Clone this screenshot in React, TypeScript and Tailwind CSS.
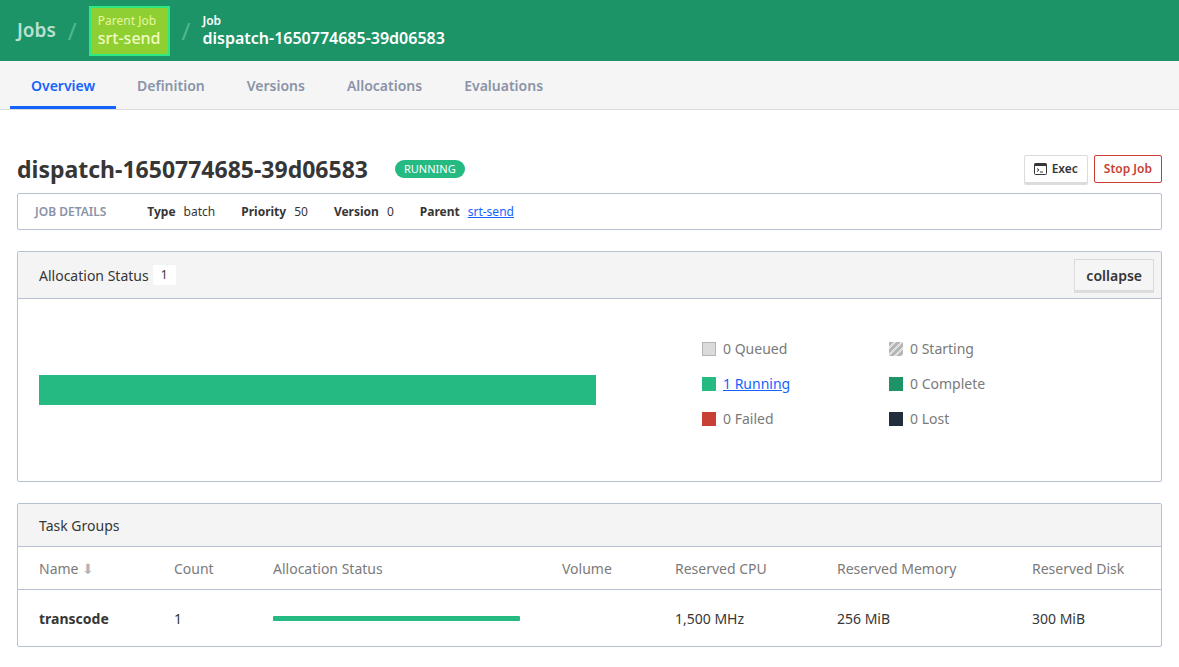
export default function App() {
  const f = { fontFamily: '"Noto Sans", "Open Sans", sans-serif' };
  const legend = (c: string, t: string, link = false, striped = false) => (
    <div className="flex items-center h-[35px] text-[14px]">
      <span
        className={`w-[14px] h-[14px] mr-[7px] ${c}`}
        style={striped ? { background: "repeating-linear-gradient(135deg,#b5b5b5 0 3px,#e0e0e0 3px 5px)" } : undefined}
      />
      <span className={link ? "text-[#1563ff] underline" : "text-[#7a7a7a]"}>{t}</span>
    </div>
  );
  return (
    <div style={f} className="w-[1179px] h-[667px] overflow-hidden bg-white text-[#363636]">
      <div className="h-[61px] bg-[#1d9467] flex items-center pl-[17px]">
        <span className="text-[19px] font-semibold text-[#b9e0d0]">Jobs</span>
        <span className="text-[24px] text-[#4fb98f] mx-[12px]">/</span>
        <div className="h-[50px] bg-[#8fcf32] border-2 border-[#2ee881] px-[7px] flex flex-col justify-center leading-tight">
          <span className="text-[12px] text-[#e4f6a0]">Parent Job</span>
          <span className="text-[16px] text-[#f0fbc0] font-medium">srt-send</span>
        </div>
        <span className="text-[24px] text-[#4fb98f] mx-[12px]">/</span>
        <div className="flex flex-col leading-tight text-white">
          <span className="text-[12px] font-semibold">Job</span>
          <span className="text-[16px] font-semibold">dispatch-1650774685-39d06583</span>
        </div>
      </div>
      <div className="h-[49px] bg-[#f5f5f5] border-b border-[#dbdbdb] flex pl-[10px] text-[14px] font-semibold text-[#8a93a8]">
        <div className="w-[106px] flex items-center justify-center text-[#1563ff] border-b-[3px] border-[#1563ff] pt-[3px]">Overview</div>
        <div className="px-[21px] flex items-center">Definition</div>
        <div className="px-[21px] flex items-center">Versions</div>
        <div className="px-[21px] flex items-center">Allocations</div>
        <div className="px-[21px] flex items-center">Evaluations</div>
      </div>
      <div className="px-[17px] pt-[42px]">
        <div className="flex items-center h-[34px]">
          <h1 className="text-[23px] font-bold">dispatch-1650774685-39d06583</h1>
          <span className="ml-[27px] bg-[#25ba81] text-white text-[11px] px-[9px] rounded-full h-[18px] flex items-center">RUNNING</span>
          <div className="ml-auto flex gap-[6px]">
            <button className="h-[28px] px-[9px] border border-[#dbdbdb] rounded-[2px] shadow-[0_2px_0_#ddd] flex items-center gap-[5px] text-[12px] font-semibold">
              <svg width="13" height="12" viewBox="0 0 13 12"><rect x="0.5" y="0.5" width="12" height="11" rx="1" fill="none" stroke="#363636"/><rect x="0.5" y="0.5" width="12" height="2.5" fill="#363636"/><path d="M3 5.5l2 1.5-2 1.5M6 9h3" stroke="#363636" fill="none"/></svg>
              Exec
            </button>
            <button className="h-[28px] px-[9px] border border-[#c84034] rounded-[2px] text-[12px] font-semibold text-[#c84034]">Stop Job</button>
          </div>
        </div>
        <div className="mt-[7px] h-[37px] border border-[#b7c0d0] rounded-[2px] flex items-center px-[17px] text-[12px]">
          <span className="font-semibold text-[#8a93a8] mr-[41px]">JOB DETAILS</span>
          <b>Type</b><span className="ml-[8px] mr-[26px]">batch</span>
          <b>Priority</b><span className="ml-[8px] mr-[26px]">50</span>
          <b>Version</b><span className="ml-[8px] mr-[26px]">0</span>
          <b>Parent</b><span className="ml-[8px] text-[#1563ff] underline">srt-send</span>
        </div>
        <div className="mt-[21px] h-[231px] border border-[#b7c0d0] rounded-[2px]">
          <div className="h-[47px] bg-[#f4f4f4] border-b border-[#b7c0d0] flex items-center pl-[21px] pr-[7px] text-[14px]">
            Allocation Status
            <span className="ml-[4px] bg-white px-[8px] py-[1px] text-[12px] rounded-[2px]">1</span>
            <button className="ml-auto h-[32px] px-[11px] bg-[#f5f5f5] border border-[#dbdbdb] shadow-[0_2px_0_#ddd] text-[14px] font-semibold">collapse</button>
          </div>
          <div className="flex pl-[21px] pt-[32px]">
            <div className="w-[557px] h-[30px] bg-[#25ba81] mt-[44px]" />
            <div className="ml-[106px] grid grid-cols-[187px_200px]">
              {legend("bg-[#dbdbdb] border border-[#b5b5b5]", "0 Queued")}
              {legend("", "0 Starting", false, true)}
              {legend("bg-[#25ba81]", "1 Running", true)}
              {legend("bg-[#1d9467]", "0 Complete")}
              {legend("bg-[#c84034]", "0 Failed")}
              {legend("bg-[#222e3e]", "0 Lost")}
            </div>
          </div>
        </div>
        <div className="mt-[21px] border border-[#b7c0d0] rounded-[2px] text-[14px]">
          <div className="h-[43px] bg-[#f4f4f4] border-b border-[#b7c0d0] flex items-center pl-[21px]">Task Groups</div>
          <div className="h-[43px] border-b border-[#b7c0d0] flex items-center pl-[21px] text-[#7a7a7a] relative">
            <span className="absolute left-[21px]">Name <span className="text-[#b5b5b5]">⬇</span></span>
            <span className="absolute left-[156px]">Count</span>
            <span className="absolute left-[255px]">Allocation Status</span>
            <span className="absolute left-[544px]">Volume</span>
            <span className="absolute left-[657px]">Reserved CPU</span>
            <span className="absolute left-[819px]">Reserved Memory</span>
            <span className="absolute left-[1014px]">Reserved Disk</span>
          </div>
          <div className="h-[56px] flex items-center relative">
            <span className="absolute left-[21px] font-bold">transcode</span>
            <span className="absolute left-[156px]">1</span>
            <span className="absolute left-[255px] w-[247px] h-[5px] bg-[#25ba81] rounded-[1px]" />
            <span className="absolute left-[657px]">1,500 MHz</span>
            <span className="absolute left-[819px]">256 MiB</span>
            <span className="absolute left-[1014px]">300 MiB</span>
          </div>
        </div>
      </div>
    </div>
  );
}
